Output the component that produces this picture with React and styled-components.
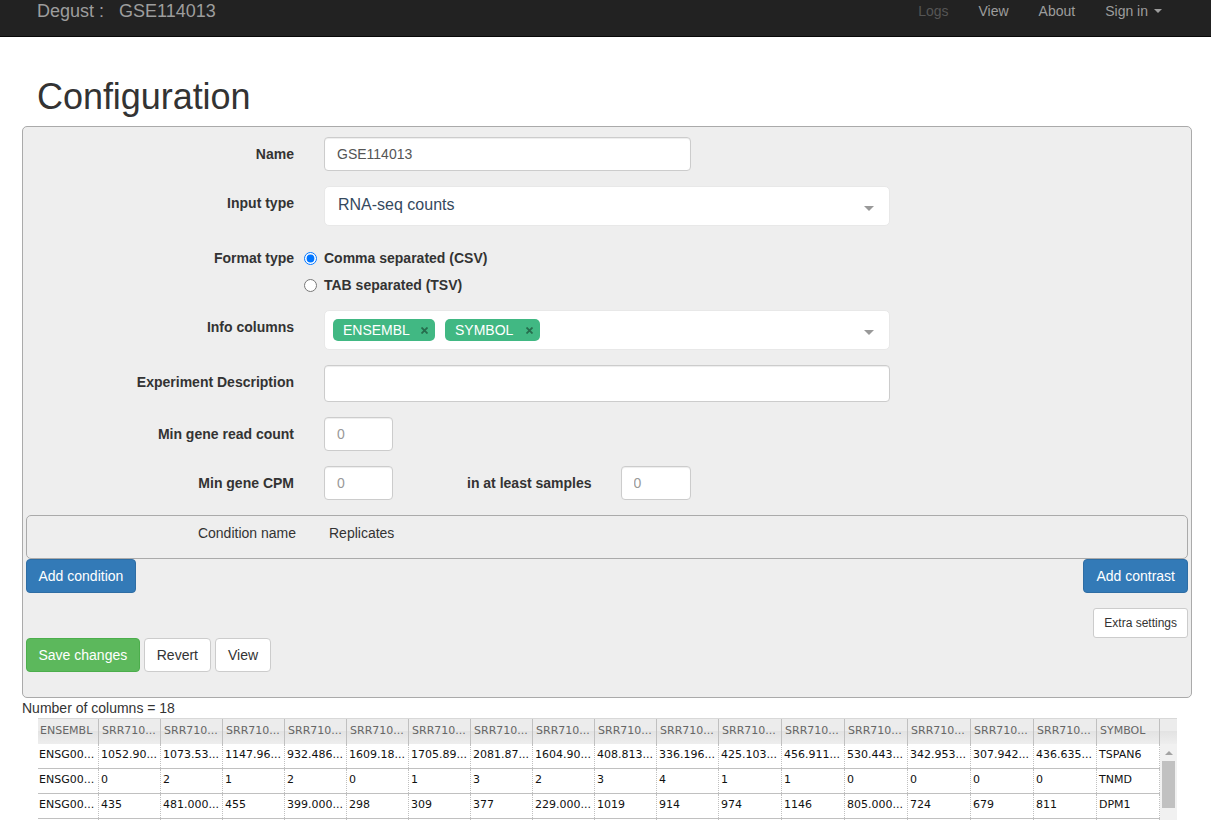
import React from 'react';
import styled, { createGlobalStyle } from 'styled-components';

const GlobalStyle = createGlobalStyle`
  html, body {
    margin: 0;
    height: 820px;
    overflow: hidden;
    background: #fff;
  }
  body {
    font-family: "Liberation Sans", Arial, sans-serif;
    font-size: 14px;
    line-height: 20px;
    color: #333;
  }
  * {
    box-sizing: border-box;
  }
`;

const COLUMNS = '61px repeat(10, 62px) repeat(7, 63px)';

const HEADERS = [
  'ENSEMBL',
  ...Array(16).fill('SRR710...'),
  'SYMBOL',
];

const ROWS = [
  ['ENSG00...', '1052.90...', '1073.53...', '1147.96...', '932.486...', '1609.18...', '1705.89...', '2081.87...', '1604.90...', '408.813...', '336.196...', '425.103...', '456.911...', '530.443...', '342.953...', '307.942...', '436.635...', 'TSPAN6'],
  ['ENSG00...', '0', '2', '1', '2', '0', '1', '3', '2', '3', '4', '1', '1', '0', '0', '0', '0', 'TNMD'],
  ['ENSG00...', '435', '481.000...', '455', '399.000...', '298', '309', '377', '229.000...', '1019', '914', '974', '1146', '805.000...', '724', '679', '811', 'DPM1'],
  Array(18).fill(''),
];

const Navbar = styled.nav`
  height: 37px;
  background: #222;
  border-bottom: 1px solid #080808;
  display: flex;
  justify-content: space-between;
`;

const Brand = styled.div`
  margin-left: 37px;
  font-size: 18px;
  line-height: 22px;
  color: #9d9d9d;
  white-space: pre;
`;

const NavLinks = styled.div`
  display: flex;
  gap: 30px;
  margin-right: 49px;
  line-height: 22px;
`;

const NavLink = styled.a`
  color: ${(p) => (p.$disabled ? '#555' : '#9d9d9d')};
  display: flex;
  align-items: center;
  height: 22px;
`;

const Caret = styled.span`
  display: inline-block;
  margin-left: 6px;
  border-top: 4px solid #9d9d9d;
  border-left: 4px solid transparent;
  border-right: 4px solid transparent;
`;

const Container = styled.main`
  width: 1170px;
  margin-left: 22px;
`;

const Title = styled.h1`
  margin: 40px 0 9px 15px;
  font-size: 36px;
  font-weight: 500;
  line-height: 40px;
  letter-spacing: -0.05px;
  color: #333;
`;

const Panel = styled.form`
  background: #eee;
  border: 1px solid #aaa;
  border-radius: 5px;
  padding: 10px 3px 25px;
  height: 572px;
`;

const FormRow = styled.div`
  display: flex;
  margin-bottom: ${(p) => p.$bottom ?? 15}px;
  margin-top: ${(p) => p.$top ?? 0}px;
`;

const Label = styled.label`
  width: 268px;
  flex: none;
  text-align: right;
  font-weight: 700;
  padding-top: 7px;
  line-height: 20px;
  color: #333;
`;

const FlatLabel = styled(Label)`
  padding-top: 0;
  line-height: 27px;
`;

const SideLabel = styled.label`
  margin: 0 29px 0 74px;
  font-weight: 700;
  padding-top: 7px;
`;

const Control = styled.div`
  margin-left: 30px;
  display: flex;
`;

const TextInput = styled.input`
  display: block;
  width: ${(p) => p.$width}px;
  height: ${(p) => p.$height ?? 34}px;
  padding: 6px 12px;
  background: #fff;
  border: 1px solid #ccc;
  border-radius: 4px;
  box-shadow: inset 0 1px 1px rgba(0, 0, 0, 0.075);
  font-family: inherit;
  font-size: 14px;
  color: #555;
  outline: none;

  &::placeholder {
    color: #999;
  }
`;

const Select = styled.div`
  position: relative;
  width: 566px;
  height: 40px;
  padding: 8px 40px 0 8px;
  background: #fff;
  border: 1px solid #e8e8e8;
  border-radius: 5px;
  display: flex;
  align-items: flex-start;
`;

const SelectValue = styled.span`
  font-size: 16px;
  line-height: 20px;
  color: #35495e;
  margin-left: 5px;
`;

const SelectArrow = styled.span`
  position: absolute;
  right: 15px;
  top: 19px;
  border-top: 5px solid #999;
  border-left: 5px solid transparent;
  border-right: 5px solid transparent;
`;

const Tag = styled.span`
  position: relative;
  width: ${(p) => p.$width}px;
  height: 22px;
  margin-right: 10px;
  padding: 1px 0 0 10px;
  background: #41b883;
  border-radius: 5px;
  color: #fff;
  font-size: 14px;
  line-height: 20px;
`;

const TagClose = styled.svg`
  position: absolute;
  right: 7px;
  top: 8px;
  width: 7px;
  height: 7px;
  stroke: #266d4d;
  stroke-width: 1.8;
`;

const RadioStack = styled.div`
  margin-left: 10px;
  display: flex;
  flex-direction: column;
`;

const RadioLine = styled.label`
  display: flex;
  align-items: center;
  height: 27px;
  font-weight: 700;
`;

const RadioText = styled.span`
  margin-bottom: 1px;
`;

const Radio = styled.input`
  width: 13px;
  height: 13px;
  margin: 0 7px 0 0;
`;

const ConditionBox = styled.div`
  height: 44px;
  border: 1px solid #aaa;
  border-radius: 5px;
  padding-top: 7px;
  display: flex;
  gap: 33px;
`;

const ConditionHead = styled.span`
  width: ${(p) => p.$width};
  text-align: ${(p) => p.$align};
`;

const SplitRow = styled.div`
  display: flex;
  justify-content: space-between;
`;

const EndRow = styled.div`
  display: flex;
  justify-content: flex-end;
  margin-top: 15px;
`;

const ButtonRow = styled.div`
  display: flex;
  gap: 4px;
`;

const VARIANTS = {
  primary: 'background: #337ab7; border-color: #2e6da4; color: #fff;',
  success: 'background: #5cb85c; border-color: #4cae4c; color: #fff;',
  plain: 'background: #fff; border-color: #ccc; color: #333;',
};

const Button = styled.button`
  height: ${(p) => (p.$small ? 30 : 34)}px;
  padding: ${(p) => (p.$small ? '5px 10px' : p.$tight ? '6px 11.5px' : '6px 12px')};
  border: 1px solid;
  border-radius: ${(p) => (p.$small ? 3 : 4)}px;
  font-family: inherit;
  font-size: ${(p) => (p.$small ? 12 : 14)}px;
  line-height: ${(p) => (p.$small ? 18 : 20)}px;
  ${(p) => VARIANTS[p.$variant ?? 'plain']}
`;

const Count = styled.div`
  height: 20px;
  color: #333;
`;

const Grid = styled.div`
  margin-left: 16px;
  width: 1139px;
  font-family: "DejaVu Sans", Verdana, sans-serif;
  font-size: 11px;
`;

const HeaderRow = styled.div`
  display: grid;
  grid-template-columns: ${COLUMNS} 17px;
  height: 26px;
  border-top: 1px solid #d8d8d8;
  background: linear-gradient(#ececec 0, #ececec 50%, #e3e3e3 50%, #eeeeee 100%);
`;

const HeaderCell = styled.div`
  padding-left: 3px;
  border-right: 1px solid #c0c0c0;
  line-height: 24px;
  color: #666;
  white-space: nowrap;
  overflow: hidden;

  &:first-child {
    padding-left: 2px;
  }
  &:last-child {
    border-right: 0;
  }
`;

const GridBody = styled.div`
  display: flex;
  height: 101px;
  overflow: hidden;
`;

const Rows = styled.div`
  flex: 1;
`;

const DataRow = styled.div`
  display: grid;
  grid-template-columns: ${COLUMNS};
  height: 25px;
  border-bottom: 1px solid #c0c0c0;
  background: #fff;
`;

const DataCell = styled.div`
  padding-left: 2px;
  border-right: 1px dotted #c0c0c0;
  line-height: 21px;
  color: #111;
  white-space: nowrap;
  overflow: hidden;

  &:first-child {
    padding-left: 1px;
  }
`;

const ScrollTrack = styled.div`
  width: 17px;
  background: #f1f1f1;
  display: flex;
  flex-direction: column;
  align-items: center;
  padding-top: 7px;
`;

const ScrollArrow = styled.span`
  border-bottom: 4px solid #a3a3a3;
  border-left: 4px solid transparent;
  border-right: 4px solid transparent;
`;

const ScrollThumb = styled.div`
  width: 13px;
  height: 47px;
  margin-top: 6px;
  background: #c1c1c1;
`;

const App = () => (
  <>
    <GlobalStyle />
    <Navbar>
      <Brand>Degust :   GSE114013</Brand>
      <NavLinks>
        <NavLink $disabled>Logs</NavLink>
        <NavLink>View</NavLink>
        <NavLink>About</NavLink>
        <NavLink>Sign in<Caret /></NavLink>
      </NavLinks>
    </Navbar>
    <Container>
      <Title>Configuration</Title>
      <Panel>
        <FormRow>
          <Label>Name</Label>
          <Control>
            <TextInput $width={367} defaultValue="GSE114013" />
          </Control>
        </FormRow>
        <FormRow $bottom={0}>
          <Label>Input type</Label>
          <Control>
            <Select>
              <SelectValue>RNA-seq counts</SelectValue>
              <SelectArrow />
            </Select>
          </Control>
        </FormRow>
        <FormRow $top={19} $bottom={11}>
          <FlatLabel>Format type</FlatLabel>
          <RadioStack>
            <RadioLine>
              <Radio type="radio" name="format" defaultChecked />
              <RadioText>Comma separated (CSV)</RadioText>
            </RadioLine>
            <RadioLine>
              <Radio type="radio" name="format" />
              <RadioText>TAB separated (TSV)</RadioText>
            </RadioLine>
          </RadioStack>
        </FormRow>
        <FormRow>
          <Label>Info columns</Label>
          <Control>
            <Select>
              <Tag $width={102}>
                ENSEMBL
                <TagClose viewBox="0 0 7 7"><path d="M0.5 0.5L6.5 6.5M6.5 0.5L0.5 6.5" /></TagClose>
              </Tag>
              <Tag $width={95}>
                SYMBOL
                <TagClose viewBox="0 0 7 7"><path d="M0.5 0.5L6.5 6.5M6.5 0.5L0.5 6.5" /></TagClose>
              </Tag>
              <SelectArrow />
            </Select>
          </Control>
        </FormRow>
        <FormRow>
          <Label>Experiment Description</Label>
          <Control>
            <TextInput $width={566} $height={37} />
          </Control>
        </FormRow>
        <FormRow>
          <Label>Min gene read count</Label>
          <Control>
            <TextInput $width={69} placeholder="0" />
          </Control>
        </FormRow>
        <FormRow>
          <Label>Min gene CPM</Label>
          <Control>
            <TextInput $width={69} placeholder="0" />
            <SideLabel>in at least samples</SideLabel>
            <TextInput $width={70} placeholder="0" />
          </Control>
        </FormRow>
        <ConditionBox>
          <ConditionHead $width="269px" $align="right">Condition name</ConditionHead>
          <ConditionHead $width="auto" $align="left">Replicates</ConditionHead>
        </ConditionBox>
        <SplitRow>
          <Button type="button" $variant="primary" $tight>Add condition</Button>
          <Button type="button" $variant="primary">Add contrast</Button>
        </SplitRow>
        <EndRow>
          <Button type="button" $small>Extra settings</Button>
        </EndRow>
        <ButtonRow>
          <Button type="button" $variant="success" $tight>Save changes</Button>
          <Button type="button">Revert</Button>
          <Button type="button">View</Button>
        </ButtonRow>
      </Panel>
      <Count>Number of columns = 18</Count>
      <Grid>
        <HeaderRow>
          {HEADERS.map((h, i) => <HeaderCell key={i}>{h}</HeaderCell>)}
          <HeaderCell />
        </HeaderRow>
        <GridBody>
          <Rows>
            {ROWS.map((row, r) => (
              <DataRow key={r}>
                {row.map((c, i) => <DataCell key={i}>{c}</DataCell>)}
              </DataRow>
            ))}
          </Rows>
          <ScrollTrack>
            <ScrollArrow />
            <ScrollThumb />
          </ScrollTrack>
        </GridBody>
      </Grid>
    </Container>
  </>
);

export default App;
